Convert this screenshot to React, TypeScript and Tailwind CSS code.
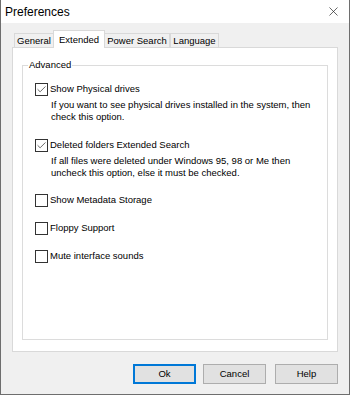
import { Check, X } from 'lucide-react'

type Opt = {
  label: string
  checked: boolean
  desc?: string[]
}

const options: Opt[] = [
  {
    label: 'Show Physical drives',
    checked: true,
    desc: ['If you want to see physical drives installed in the system, then', 'check this option.'],
  },
  {
    label: 'Deleted folders Extended Search',
    checked: true,
    desc: ['If all files were deleted under Windows 95, 98 or Me then', 'uncheck this option, else it must be checked.'],
  },
  { label: 'Show Metadata Storage', checked: false },
  { label: 'Floppy Support', checked: false },
  { label: 'Mute interface sounds', checked: false },
]

const tabs = [
  { name: 'General', w: 'w-[40px]' },
  { name: 'Extended', w: 'w-[52px]' },
  { name: 'Power Search', w: 'w-[66px]' },
  { name: 'Language', w: 'w-[49px]' },
]

function CheckRow({ opt }: { opt: Opt }) {
  return (
    <div className="flex flex-col">
      <div className="flex items-center h-[15px]">
        <div className="w-[13px] h-[13px] border border-[#333] bg-white flex items-center justify-center">
          {opt.checked && <Check className="w-[11px] h-[11px] text-[#333]" strokeWidth={1.6} />}
        </div>
        <span className="ml-[2px]">{opt.label}</span>
      </div>
      {opt.desc && (
        <div className="pl-[16px] pt-[2px] leading-[12px] whitespace-nowrap">
          {opt.desc.map((d) => (
            <div key={d}>{d}</div>
          ))}
        </div>
      )}
    </div>
  )
}

export default function App() {
  return (
    <div
      className="w-[350px] h-[395px] flex flex-col bg-[#f0f0f0] border-x border-b border-[#6e6e6e] text-[#000] text-[9.5px]"
      style={{ fontFamily: '"Liberation Sans", Arial, sans-serif' }}
    >
      {/* title bar */}
      <div className="h-[23px] bg-white flex items-center justify-between pl-[4px] pr-[8px]">
        <span className="text-[12px]">Preferences</span>
        <X className="w-[15px] h-[15px] text-[#222]" strokeWidth={1.1} />
      </div>

      {/* tabs */}
      <div className="flex items-end h-[25px] pl-[13px]">
        {tabs.map((t) => {
          const active = t.name === 'Extended'
          return active ? (
            <div
              key={t.name}
              className={`${t.w} relative z-10 -mx-[1px] h-[18px] bg-white border border-b-0 border-[#d9d9d9] flex justify-center pt-[2px]`}
            >
              {t.name}
            </div>
          ) : (
            <div
              key={t.name}
              className={`${t.w} h-[15px] bg-[#f0f0f0] border border-b-0 border-[#d9d9d9] flex items-center justify-center`}
            >
              {t.name}
            </div>
          )
        })}
      </div>

      {/* tab panel */}
      <div className="ml-[11px] mr-[11px] h-[305px] -mt-px bg-white border border-[#d9d9d9] px-[9px] pt-[11px] pb-[11px] flex">
        <fieldset className="flex-1 border border-[#dcdcdc] px-[12px] pt-[11px] m-0 min-w-0">
          <legend className="px-[1px] ml-[-7px] leading-[12px]">Advanced</legend>
          <div className="flex flex-col gap-[15px]">
            {options.slice(0, 2).map((o) => (
              <CheckRow key={o.label} opt={o} />
            ))}
          </div>
          <div className="flex flex-col gap-[13px] mt-[14px]">
            {options.slice(2).map((o) => (
              <CheckRow key={o.label} opt={o} />
            ))}
          </div>
        </fieldset>
      </div>

      {/* buttons */}
      <div className="flex justify-end pr-[11px] mt-[12px]">
        <button className="w-[63px] h-[20px] mr-[7px] bg-[#e1e1e1] border-2 border-[#0078d7]">Ok</button>
        <button className="w-[63px] h-[20px] mr-[9px] bg-[#e1e1e1] border border-[#adadad]">Cancel</button>
        <button className="w-[63px] h-[20px] bg-[#e1e1e1] border border-[#adadad]">Help</button>
      </div>
    </div>
  )
}
